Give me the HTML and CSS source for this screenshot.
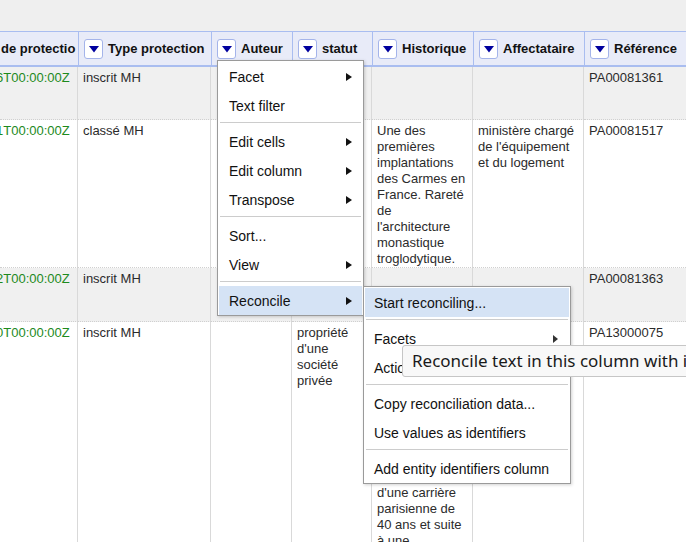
FILE: index.html
```html
<!DOCTYPE html>
<html>
<head>
<meta charset="utf-8">
<link rel="stylesheet" href="styles.css">
</head>
<body>
<div class="topbar"></div>
<table class="grid">
  <colgroup>
    <col class="w0"><col class="w1"><col class="w2"><col class="w3"><col class="w4"><col class="w5"><col class="w6">
  </colgroup>
  <thead>
    <tr>
      <th class="first"><div class="hcell"><span class="hlabel">de protectio</span></div></th>
      <th><div class="hcell"><span class="dd"><svg width="10" height="7" viewBox="0 0 10 7"><polygon points="0,0 10,0 5,6.5" fill="#00009e"/></svg></span><span class="hlabel">Type protection</span></div></th>
      <th><div class="hcell"><span class="dd"><svg width="10" height="7" viewBox="0 0 10 7"><polygon points="0,0 10,0 5,6.5" fill="#00009e"/></svg></span><span class="hlabel">Auteur</span></div></th>
      <th><div class="hcell"><span class="dd"><svg width="10" height="7" viewBox="0 0 10 7"><polygon points="0,0 10,0 5,6.5" fill="#00009e"/></svg></span><span class="hlabel">statut</span></div></th>
      <th><div class="hcell"><span class="dd"><svg width="10" height="7" viewBox="0 0 10 7"><polygon points="0,0 10,0 5,6.5" fill="#00009e"/></svg></span><span class="hlabel">Historique</span></div></th>
      <th><div class="hcell"><span class="dd"><svg width="10" height="7" viewBox="0 0 10 7"><polygon points="0,0 10,0 5,6.5" fill="#00009e"/></svg></span><span class="hlabel">Affectataire</span></div></th>
      <th><div class="hcell"><span class="dd"><svg width="10" height="7" viewBox="0 0 10 7"><polygon points="0,0 10,0 5,6.5" fill="#00009e"/></svg></span><span class="hlabel">Référence</span></div></th>
    </tr>
  </thead>
  <tbody>
    <tr class="odd r1">
      <td class="date">6T00:00:00Z</td>
      <td>inscrit MH</td>
      <td></td>
      <td></td>
      <td></td>
      <td></td>
      <td>PA00081361</td>
    </tr>
    <tr class="r2">
      <td class="date">1T00:00:00Z</td>
      <td>classé MH</td>
      <td></td>
      <td></td>
      <td>Une des premières implantations des Carmes en France. Rareté de l'architecture monastique troglodytique.</td>
      <td>ministère chargé de l'équipement et du logement</td>
      <td>PA00081517</td>
    </tr>
    <tr class="odd r3">
      <td class="date">2T00:00:00Z</td>
      <td>inscrit MH</td>
      <td></td>
      <td></td>
      <td></td>
      <td></td>
      <td>PA00081363</td>
    </tr>
    <tr class="r4">
      <td class="date">0T00:00:00Z</td>
      <td>inscrit MH</td>
      <td></td>
      <td>propriété d'une société privée</td>
      <td><div class="hist-top">Ensemble construit par un architecte installé à Marseille, conçu comme un lieu de vie et de travail, à son retour</div>d'une carrière parisienne de 40 ans et suite à une commande privée.</td>
      <td></td>
      <td>PA13000075</td>
    </tr>
  </tbody>
</table>

<div class="menu menu-col">
  <div class="item">Facet<span class="arrow"></span></div>
  <div class="item">Text filter</div>
  <div class="sep"></div>
  <div class="item">Edit cells<span class="arrow"></span></div>
  <div class="item">Edit column<span class="arrow"></span></div>
  <div class="item">Transpose<span class="arrow"></span></div>
  <div class="sep"></div>
  <div class="item">Sort...</div>
  <div class="item">View<span class="arrow"></span></div>
  <div class="sep"></div>
  <div class="item active">Reconcile<span class="arrow"></span></div>
</div>

<div class="menu menu-sub">
  <div class="item active">Start reconciling...</div>
  <div class="sep"></div>
  <div class="item">Facets<span class="arrow sub"></span></div>
  <div class="item">Actions<span class="arrow sub"></span></div>
  <div class="sep"></div>
  <div class="item">Copy reconciliation data...</div>
  <div class="item">Use values as identifiers</div>
  <div class="sep"></div>
  <div class="item">Add entity identifiers column</div>
</div>

<div class="tooltip">Reconcile text in this column with items in a reconciliation service</div>
</body>
</html>
```

FILE: styles.css
```css
html, body {
  margin: 0;
  padding: 0;
}
body {
  width: 686px;
  height: 542px;
  overflow: hidden;
  background: #ffffff;
  font-family: "Liberation Sans", Arial, sans-serif;
  font-size: 13px;
  color: #2b2b2b;
  position: relative;
}
.topbar {
  height: 31px;
  background: #efefef;
}
.grid {
  border-collapse: separate;
  border-spacing: 0;
  table-layout: fixed;
  width: 704px;
}
.w0 { width: 78px; }
.w1 { width: 133px; }
.w2 { width: 81px; }
.w3 { width: 80px; }
.w4 { width: 101px; }
.w5 { width: 111px; }
.w6 { width: 120px; }

.grid th {
  padding: 0;
  background: #e8ebf8;
  border-top: 1px solid #a9bdf0;
  border-bottom: 2px solid #a9bdf0;
  border-left: 1px solid #a9bdf0;
  text-align: left;
  font-weight: bold;
  color: #111;
  white-space: nowrap;
  overflow: hidden;
}
.grid th.first {
  border-left: none;
}
.hcell {
  height: 33px;
  display: flex;
  align-items: center;
  gap: 5px;
  padding-left: 5px;
}
.first .hcell {
  padding-left: 1px;
}
.dd {
  width: 17px;
  height: 18px;
  border: 1px solid #a4b4ea;
  border-radius: 3px;
  background: #ffffff;
  display: flex;
  align-items: center;
  justify-content: center;
  flex: none;
}
.dd svg {
  display: block;
  margin-top: 1px;
}
.hlabel {
  font-size: 13px;
}

.grid td {
  vertical-align: top;
  padding: 3px 5px 0 5px;
  border-right: 1px solid #d9d9d9;
  border-bottom: 1px dotted #d0d0d0;
  line-height: 16px;
  overflow: hidden;
}
.grid tr.odd td {
  background: #f0f0f0;
}
.grid td.date {
  color: #1d8a1d;
  white-space: nowrap;
  padding-left: 0;
  text-indent: -4px;
  overflow: visible;
}
.hist-top {
  height: 160px;
  overflow: hidden;
}
.r1 { height: 53px; }
.r2 { height: 148px; }
.r3 { height: 54px; }
.r4 { height: 260px; }

.menu {
  position: absolute;
  background: #ffffff;
  border: 1px solid #9a9a9a;
  box-shadow: 1px 1px 3px rgba(0, 0, 0, 0.18);
  padding: 1px 1px 0 1px;
  font-size: 14px;
  color: #111;
  box-sizing: border-box;
}
.menu-col {
  left: 217px;
  top: 60px;
  width: 147px;
}
.menu-sub {
  left: 363px;
  top: 286px;
  width: 208px;
}
.item {
  height: 29px;
  display: flex;
  align-items: center;
  justify-content: space-between;
  padding: 0 10px 0 10px;
  white-space: nowrap;
}
.menu-sub .item {
  padding-left: 9px;
  padding-right: 11px;
}
.item.active {
  background: #d5e3f5;
}
.arrow {
  width: 0;
  height: 0;
  border-left: 6px solid #111;
  border-top: 4.5px solid transparent;
  border-bottom: 4.5px solid transparent;
}
.arrow.sub {
  border-left: 5px solid #333;
}
.sep {
  border-top: 1px solid #cccccc;
  margin: 2px 1px 4px 1px;
}
.tooltip {
  position: absolute;
  left: 402px;
  top: 345px;
  height: 30px;
  padding: 0 9px;
  background: #f8f8f8;
  border: 1px solid #c6c6c6;
  border-radius: 3px;
  font-family: "Noto Sans", "Open Sans", sans-serif;
  font-size: 17px;
  line-height: 30px;
  color: #1a1a1a;
  white-space: nowrap;
}
```
